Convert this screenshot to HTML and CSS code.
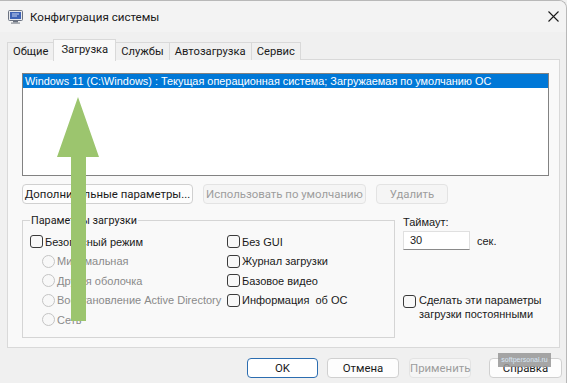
FILE: index.html
```html
<!DOCTYPE html>
<html lang="ru">
<head>
  <meta charset="UTF-8" />
  <title>Конфигурация системы</title>
  <link rel="stylesheet" href="styles.css">
</head>
<body>
  <div class="window">
    <div class="titlebar">
      <svg class="app-icon" width="15" height="15" viewBox="0 0 15 15">
        <rect x="0.5" y="1.5" width="14" height="10" rx="1" fill="#e6e8ec" stroke="#6b7280"/>
        <rect x="2" y="3" width="11" height="7" fill="#3f63b5"/>
        <path d="M4 5h7M4 7h5" stroke="#c9d6f2" stroke-width="1"/>
        <rect x="5" y="12" width="5" height="1.5" fill="#6b7280"/>
        <rect x="3" y="13.5" width="9" height="1.2" fill="#8a8f98"/>
      </svg>
      <span class="title">Конфигурация системы</span>
      <svg class="close" width="11" height="11" viewBox="0 0 11 11">
        <path d="M0.5 0.5L10.5 10.5M10.5 0.5L0.5 10.5" stroke="#1a1a1a" stroke-width="1.1"/>
      </svg>
    </div>

    <div class="tabs">
      <div class="tab">Общие</div>
      <div class="tab active">Загрузка</div>
      <div class="tab">Службы</div>
      <div class="tab">Автозагрузка</div>
      <div class="tab">Сервис</div>
    </div>

    <div class="panel">
      <div class="listbox">
        <div class="entry selected">Windows 11 (C:\Windows) : Текущая операционная система; Загружаемая по умолчанию ОС</div>
      </div>

      <div class="actions">
        <button class="btn w-adv">Дополнительные параметры...</button>
        <button class="btn w-default" disabled>Использовать по умолчанию</button>
        <button class="btn w-del" disabled>Удалить</button>
      </div>

      <div class="lower">
        <fieldset class="group">
          <legend>Параметры загрузки</legend>
          <div class="group-cols">
            <div class="col col-left">
              <div class="row"><span class="check"></span>Безопасный режим</div>
              <div class="row sub disabled"><span class="radio"></span>Минимальная</div>
              <div class="row sub disabled"><span class="radio"></span>Другая оболочка</div>
              <div class="row sub disabled"><span class="radio"></span>Восстановление Active Directory</div>
              <div class="row sub disabled"><span class="radio"></span>Сеть</div>
            </div>
            <div class="col col-right">
              <div class="row"><span class="check"></span>Без GUI</div>
              <div class="row"><span class="check"></span>Журнал загрузки</div>
              <div class="row"><span class="check"></span>Базовое видео</div>
              <div class="row"><span class="check"></span>Информация&nbsp; об ОС</div>
            </div>
          </div>
        </fieldset>

        <div class="side">
          <div class="side-label">Таймаут:</div>
          <div class="timeout">
            <div class="input">30</div>
            <span class="unit">сек.</span>
          </div>
          <div class="persist">
            <span class="check"></span>
            <span class="persist-text">Сделать эти параметры<br>загрузки постоянными</span>
          </div>
        </div>
      </div>
    </div>

    <div class="footer">
      <button class="btn btn-ok">OK</button>
      <button class="btn btn-cancel">Отмена</button>
      <button class="btn btn-apply" disabled>Применить</button>
      <button class="btn btn-help">Справка</button>
    </div>

    <div class="watermark">softpersonal.ru</div>

    <svg class="arrow" width="43" height="224" viewBox="0 0 43 224">
      <polygon points="21,0 42,60 29,60 29,224 14,224 14,60 0,60" fill="#9cc56e"/>
    </svg>
  </div>
</body>
</html>
```

FILE: styles.css
```css
* {
  box-sizing: border-box;
}
html, body {
  margin: 0;
  padding: 0;
  background: #f0f0f0;
}
.window {
  position: relative;
  width: 567px;
  height: 383px;
  background: #f0f0f0;
  border-top: 1px solid #b8b8b8;
  border-right: 1px solid #b8b8b8;
  border-top-right-radius: 8px;
  overflow: hidden;
  font-family: Roboto, sans-serif;
  font-size: 11.3px;
  color: #1a1a1a;
}
.titlebar {
  height: 31px;
  background: #f3f3f3;
  display: flex;
  align-items: center;
  padding-left: 8px;
}
.title {
  margin-left: 7px;
  font-size: 11.6px;
}
.close {
  margin-left: auto;
  margin-right: 7px;
}

.tabs {
  display: flex;
  align-items: flex-end;
  height: 21px;
  margin-top: 7px;
  padding-left: 7px;
  position: relative;
  z-index: 2;
}
.tab {
  height: 18px;
  line-height: 17px;
  padding: 0 5px;
  border: 1px solid #d9d9d9;
  border-bottom: none;
  margin-right: -1px;
  background: #f0f0f0;
  font-size: 11.2px;
  white-space: nowrap;
}
.tab.active {
  height: 22px;
  line-height: 19px;
  margin-bottom: -1px;
  background: #f9f9f9;
  padding: 0 7px;
}

.panel {
  margin: -1px 0 0 7px;
  width: 553px;
  height: 289px;
  border: 1px solid #d9d9d9;
  background: #f9f9f9;
  padding: 13px 10px 0 14px;
}
.listbox {
  height: 103px;
  background: #fff;
  border: 1px solid #828282;
}
.entry {
  height: 14px;
  line-height: 14px;
  padding-left: 2px;
  font-family: "Liberation Sans", sans-serif;
  font-size: 10.9px;
  white-space: nowrap;
}
.entry.selected {
  background: #0078d7;
  color: #fff;
}

.actions {
  display: flex;
  gap: 10px;
  margin-top: 8px;
}
.btn {
  height: 20px;
  padding: 0;
  border: 1px solid #d0d0d0;
  border-radius: 4px;
  background: #fdfdfd;
  font-family: Roboto, sans-serif;
  font-size: 11.4px;
  color: #1a1a1a;
  text-align: center;
  white-space: nowrap;
}
.btn:disabled {
  background: #f5f5f5;
  border-color: #e3e3e3;
  color: #9d9d9d;
}
.w-adv { width: 171px; }
.w-default { width: 163px; }
.w-del { width: 72px; }

.lower {
  display: flex;
  gap: 8px;
  margin-top: 9px;
}
.group {
  flex: none;
  width: 373px;
  min-width: 0;
  height: 125px;
  margin: 0;
  padding: 4px 0 0 7px;
  border: 1px solid #d5d5d5;
}
.group legend {
  padding: 0 1px;
  font-size: 10.8px;
  line-height: 15px;
}
.group-cols {
  display: flex;
}
.col-left {
  width: 197px;
  flex: none;
}
.col-right {
  flex: 1;
}
.row {
  display: flex;
  align-items: center;
  height: 19.5px;
  font-family: "Liberation Sans", sans-serif;
  font-size: 11px;
  white-space: nowrap;
}
.row.sub {
  padding-left: 12px;
}
.row.disabled {
  color: #8a8a8a;
}
.check {
  width: 13px;
  height: 13px;
  border: 1px solid #3a3a3a;
  border-radius: 3px;
  background: #f8f8f8;
  margin-right: 2px;
  flex: none;
}
.radio {
  width: 13px;
  height: 13px;
  border: 1px solid #c4c4c4;
  border-radius: 50%;
  background: #f8f8f8;
  margin-right: 2px;
  flex: none;
}

.side {
  flex: 1;
  padding-top: 2px;
  font-family: "Liberation Sans", sans-serif;
  font-size: 11px;
}
.side-label {
  line-height: 14px;
}
.timeout {
  display: flex;
  align-items: center;
  margin-top: 2px;
}
.input {
  width: 67px;
  height: 19px;
  background: #fff;
  border: 1px solid #e0e0e0;
  border-bottom-color: #8a8a8a;
  line-height: 17px;
  padding-left: 6px;
}
.unit {
  margin-left: 7px;
}
.persist {
  display: flex;
  align-items: flex-start;
  margin-top: 43px;
}
.persist .check {
  margin-top: 2px;
  margin-right: 3px;
}
.persist-text {
  line-height: 14px;
  white-space: nowrap;
}

.footer {
  display: flex;
  justify-content: flex-end;
  padding-right: 4px;
  margin-top: 10px;
}
.btn-ok {
  width: 71px;
  border-color: #2c6db0;
  background: #fff;
}
.btn-cancel {
  width: 72px;
  margin-left: 9px;
}
.btn-apply {
  width: 62px;
  margin-left: 10px;
}
.btn-help {
  width: 73px;
  margin-left: 18px;
}

.watermark {
  position: absolute;
  left: 498px;
  top: 352px;
  width: 53px;
  height: 14px;
  background: rgba(150, 150, 150, 0.85);
  color: #d8e6f5;
  font-family: "Liberation Sans", sans-serif;
  font-size: 7px;
  line-height: 14px;
  text-align: center;
  overflow: hidden;
}
.arrow {
  position: absolute;
  left: 57px;
  top: 96px;
}
```
